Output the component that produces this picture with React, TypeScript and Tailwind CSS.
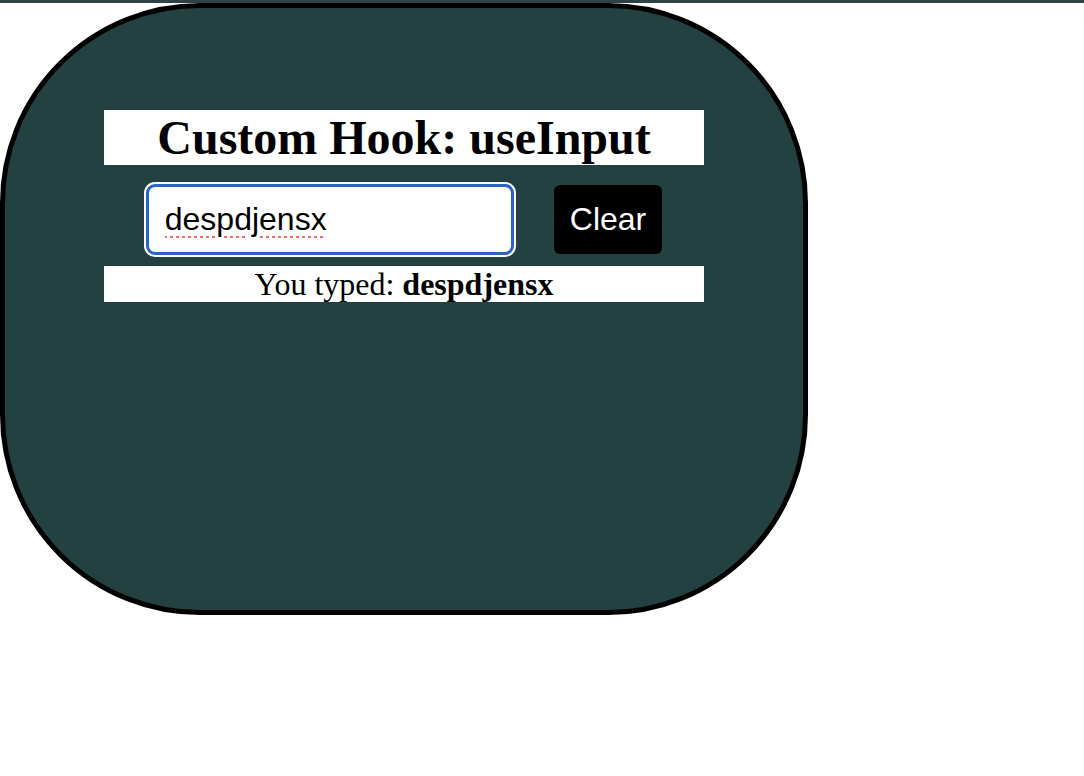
import React, { useState } from 'react';

function useInput(initial: string) {
  const [value, setValue] = useState(initial);
  const onChange = (e: React.ChangeEvent<HTMLInputElement>) => setValue(e.target.value);
  const clear = () => setValue('');
  return { value, onChange, clear };
}

export default function App() {
  const text = useInput('despdjensx');

  return (
    <div className="min-h-screen bg-white font-['Liberation_Serif',serif]">
      <div className="h-[3px] w-full bg-[#2e4241]" />
      <div className="w-[808px] h-[612px] rounded-[200px] border-[5px] border-black bg-[#234141] px-[99px] pt-[102px]">
        <h1 className="h-[55px] bg-white text-center text-[48px] leading-[55px] font-bold text-black">
          Custom Hook: useInput
        </h1>
        <div className="mt-[19px] flex h-[71px] items-center justify-center gap-[40px]">
          <input
            value={text.value}
            onChange={text.onChange}
            className="h-[71px] w-[368px] rounded-[9px] border-[3px] border-[#2b62c6] bg-white px-[16px] font-['Liberation_Sans',Arial,sans-serif] text-[32px] text-black underline decoration-dotted decoration-[#ec6e6e] decoration-[3px] underline-offset-[6px] outline-none ring-2 ring-white"
          />
          <button
            onClick={text.clear}
            className="h-[69px] rounded-[6px] bg-black px-[16px] font-['Liberation_Sans',Arial,sans-serif] text-[32px] leading-[37px] text-white"
          >
            Clear
          </button>
        </div>
        <p className="mt-[11px] h-[36px] bg-white text-center text-[32px] leading-[36px] text-black">
          You typed: <b>{text.value}</b>
        </p>
      </div>
    </div>
  );
}
